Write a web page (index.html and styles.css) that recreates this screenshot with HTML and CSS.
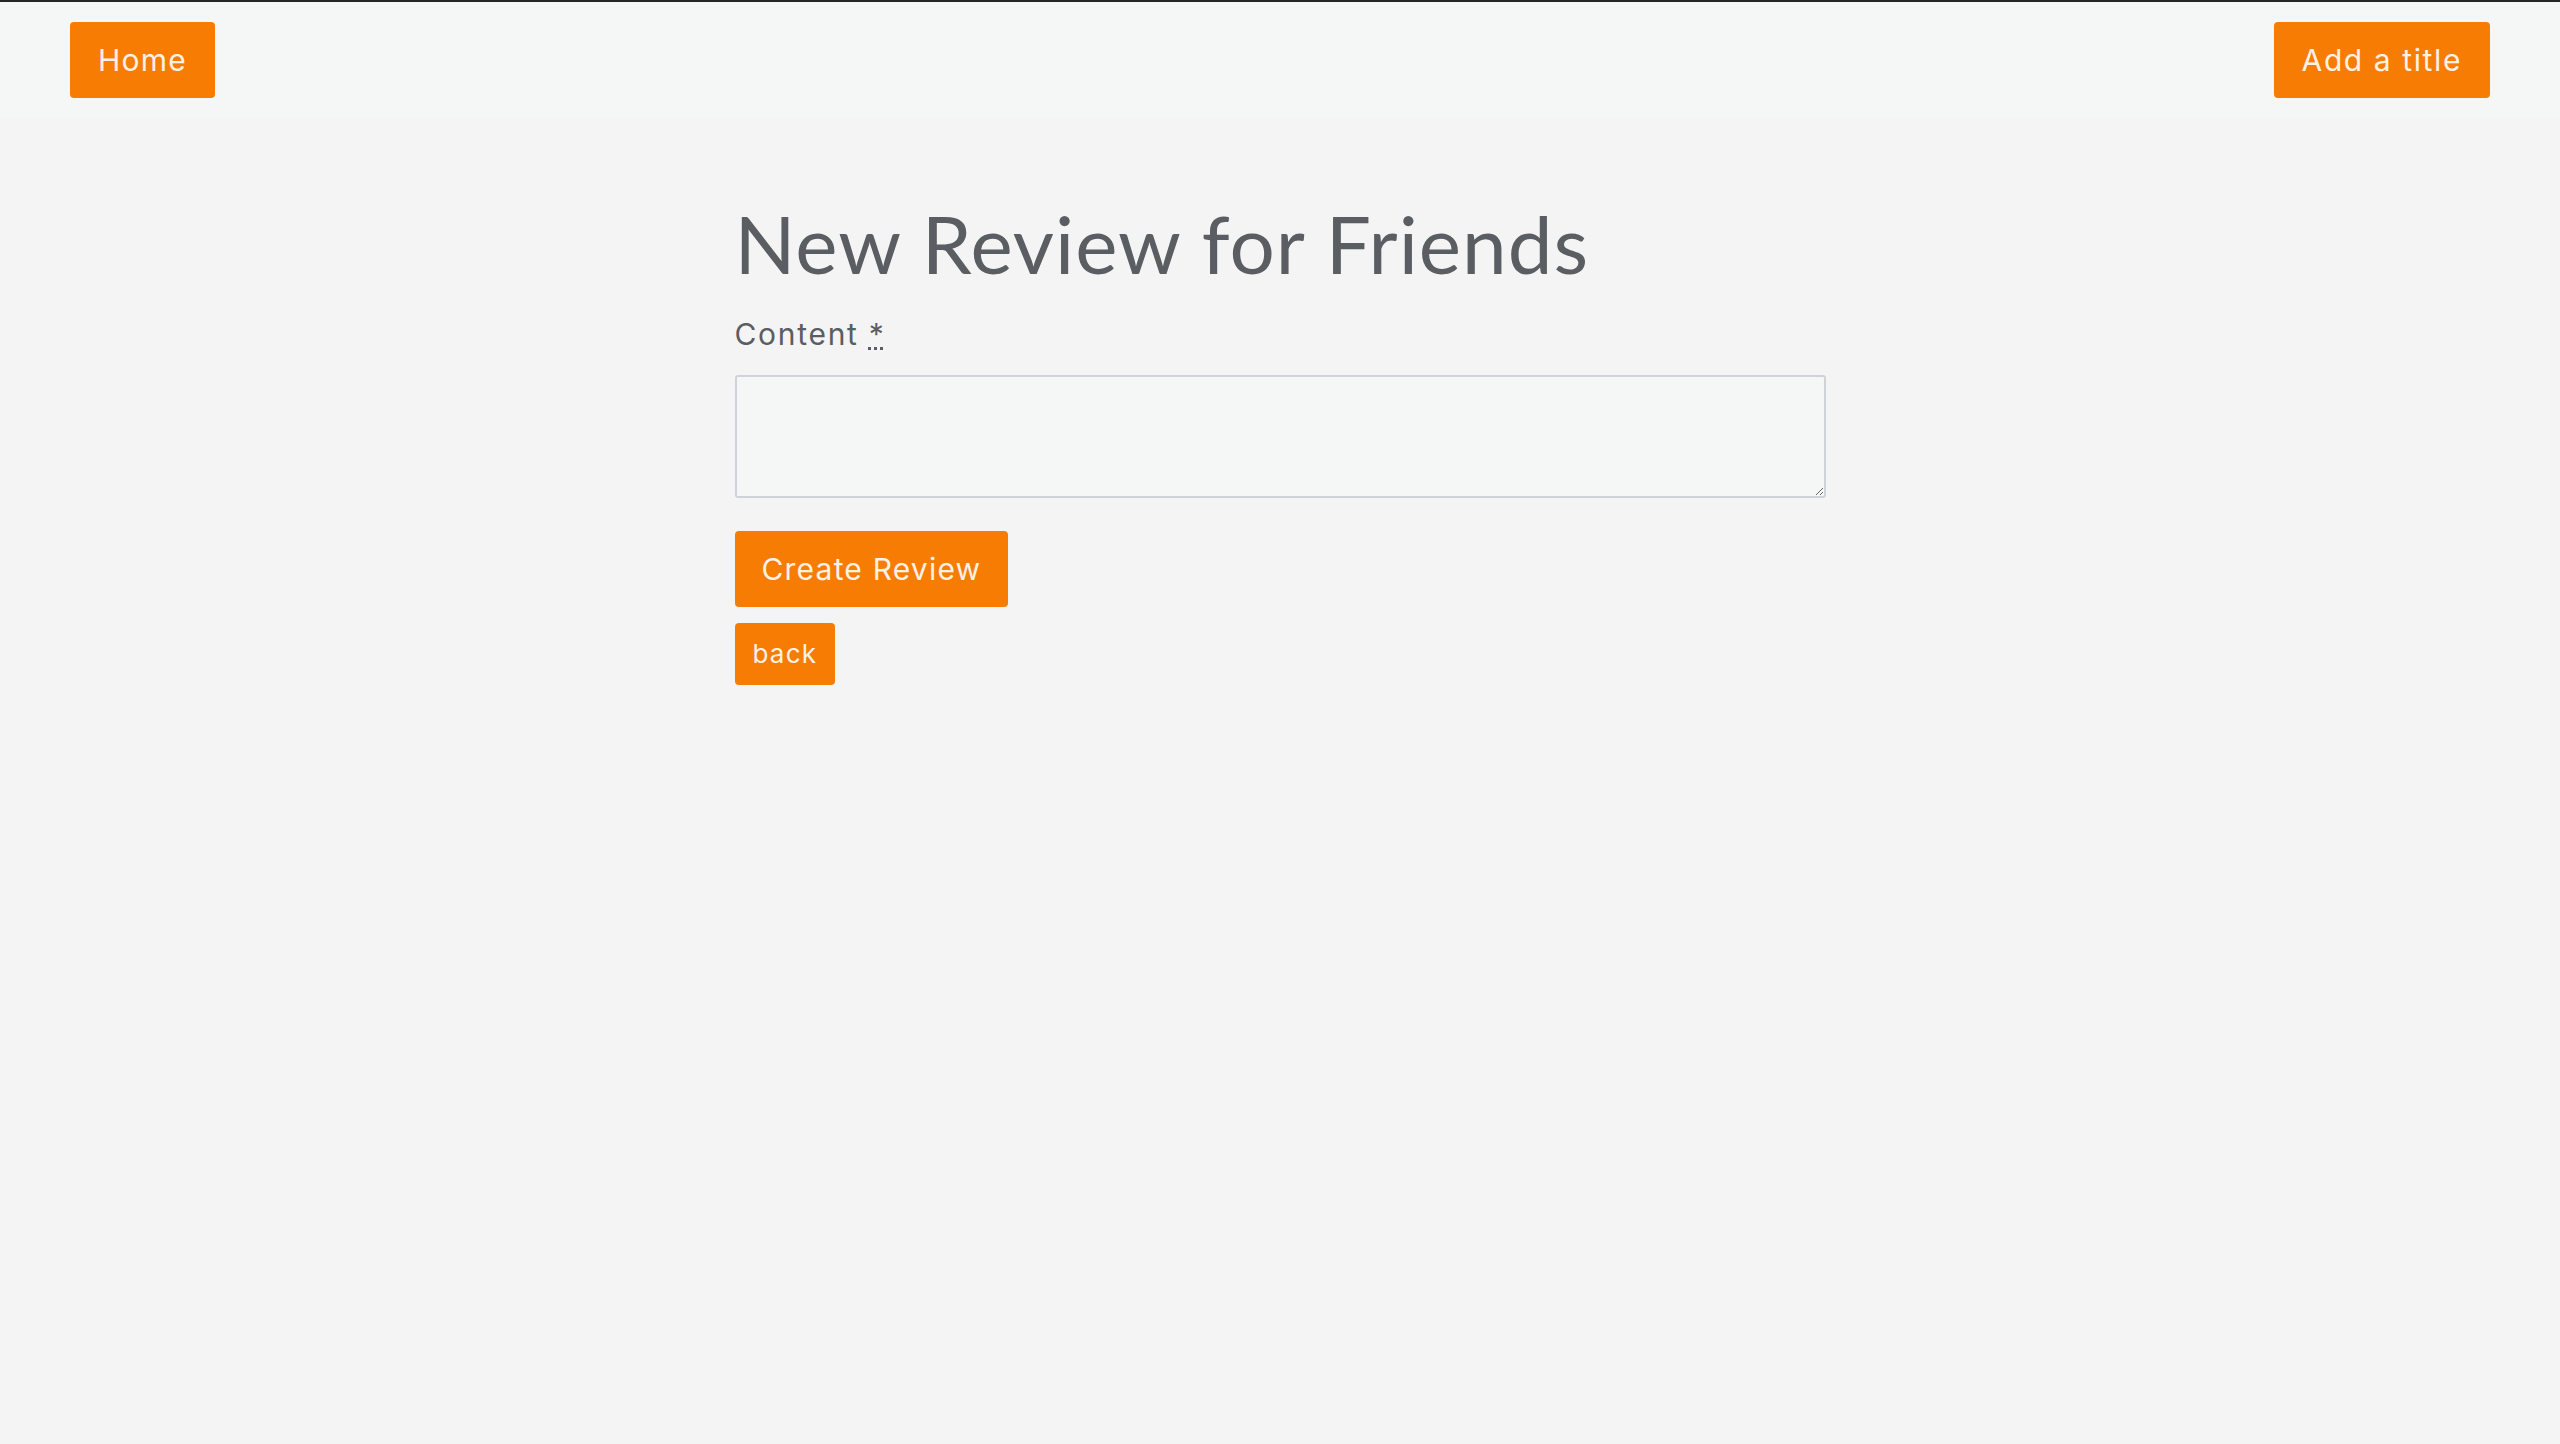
FILE: index.html
```html
<!DOCTYPE html>
<html lang="en">
<head>
    <meta charset="UTF-8">
    <meta name="viewport" content="width=device-width, initial-scale=1.0">
    <title>New Review</title>
    <link rel="stylesheet" href="styles.css">
</head>
<body>

    <nav class="topbar">
        <a class="btn nav-btn" href="#">Home</a>
        <a class="btn nav-btn" href="#">Add a title</a>
    </nav>

    <main class="container">
        <h1>New Review for Friends</h1>

        <form class="review-form">
            <div class="form-group">
                <label for="review-content">Content <abbr title="required">*</abbr></label>
                <textarea id="review-content" name="content"></textarea>
            </div>
            <button type="submit" class="btn submit-btn">Create Review</button>
        </form>

        <a class="btn back-btn" href="#">back</a>
    </main>

</body>
</html>
```

FILE: styles.css
```css
:root {
    --orange: #f77c04;
    --btn-text: #fdf1e6;
    --text-color: #5a5d61;
    --background-color: #f4f4f4;
    --bar-color: #f5f6f6;
}

body {
    margin: 0;
    background-color: var(--background-color);
    color: var(--text-color);
    font-family: Inter, "Liberation Sans", sans-serif;
}

.topbar {
    display: flex;
    justify-content: space-between;
    align-items: center;
    padding: 20px 70px;
    background: var(--bar-color);
    border-top: 2px solid #262626;
}

.btn {
    display: inline-block;
    background-color: var(--orange);
    color: var(--btn-text);
    border: none;
    border-radius: 4px;
    text-decoration: none;
    font-family: inherit;
    letter-spacing: 1.2px;
    cursor: pointer;
}

.nav-btn {
    font-size: 30px;
    line-height: 46px;
    padding: 15px 28px;
}

.nav-btn:last-child {
    letter-spacing: 1.6px;
}

.container {
    max-width: 1091px;
    margin: 0 auto;
}

h1 {
    font-family: Lato, "Noto Sans", sans-serif;
    font-weight: 400;
    font-size: 80px;
    line-height: 96px;
    letter-spacing: 1px;
    margin: 77px 0 0;
}

.form-group {
    display: flex;
    flex-direction: column;
    gap: 21px;
    margin-top: 23px;
}

label {
    font-size: 30px;
    line-height: 40px;
    letter-spacing: 1.7px;
}

abbr {
    text-decoration: underline dotted;
}

textarea {
    height: 123px;
    box-sizing: border-box;
    background: var(--bar-color);
    border: 2px solid #cfd3d7;
    border-radius: 3px;
    resize: vertical;
}

.submit-btn {
    margin-top: 33px;
    font-size: 30px;
    line-height: 46px;
    padding: 15px 27px;
}

.back-btn {
    margin-top: 16px;
    font-size: 26px;
    line-height: 38px;
    padding: 12px 18px;
}
```
